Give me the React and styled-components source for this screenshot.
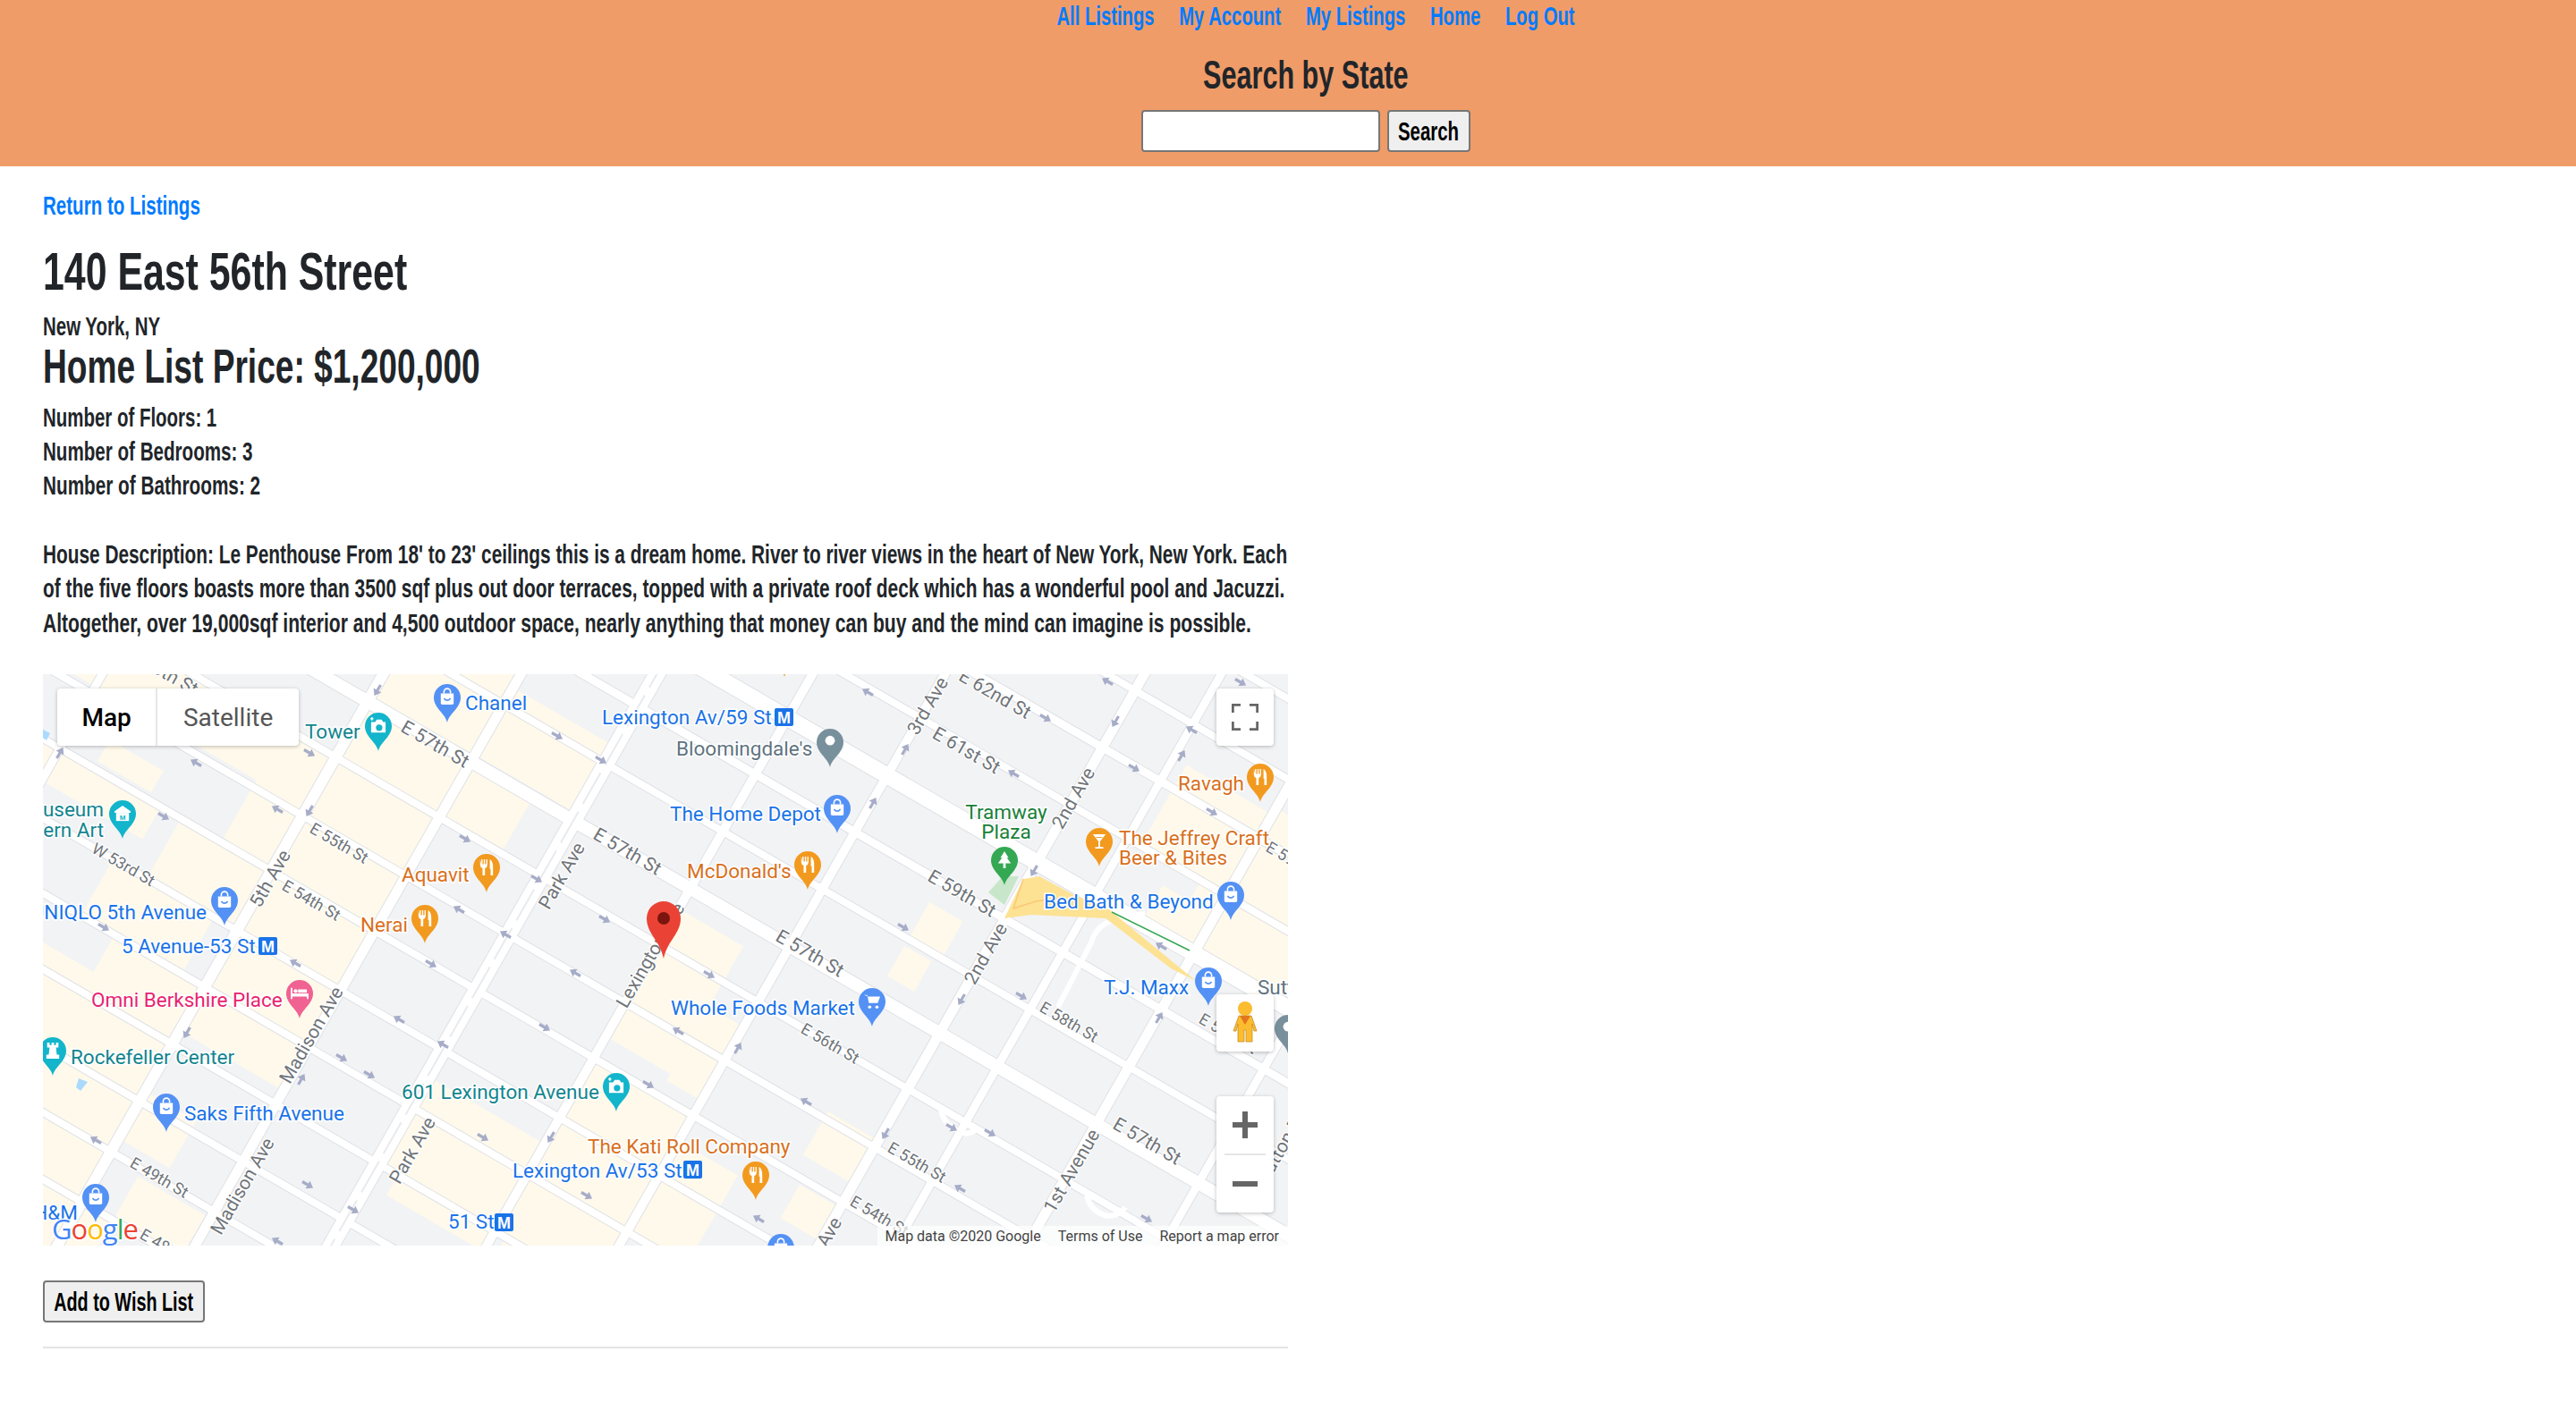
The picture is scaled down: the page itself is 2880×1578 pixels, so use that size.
import React from 'react'
import styled, { createGlobalStyle, css } from 'styled-components'

const FONT = '"Liberation Sans", Arial, sans-serif'

// no condensed family is installed, so the heading font is narrowed by hand
const narrow = (f, origin = 'left center') => css`
  transform: scaleX(${f});
  transform-origin: ${origin};
  white-space: nowrap;
`

const Global = createGlobalStyle`
  html, body { margin: 0; padding: 0; background: #fff; }
  body { font-family: ${FONT}; color: #212529; font-weight: 700; overflow-x: hidden; }
`

const Header = styled.header`
  height: 186px;
  background: #f09c68;
  display: flex;
  flex-direction: column;
  align-items: center;
`
const Nav = styled.nav`
  display: flex;
  gap: 41px;
  height: 36px;
  align-items: center;
  margin-left: 62px;
  ${narrow(0.675, 'center')}
`
const NavLink = styled.a`
  color: #007bff;
  font-size: 30px;
`
const SearchTitle = styled.h2`
  margin: 18px 0 0 40px;
  font-size: 45px;
  line-height: 60px;
  ${narrow(0.68, 'center')}
`
const SearchForm = styled.form`
  display: flex;
  gap: 8px;
  margin-top: 9px;
  padding-left: 40px;
`
const SearchInput = styled.input`
  width: 267px;
  height: 47px;
  box-sizing: border-box;
  border: 2px solid #767676;
  border-radius: 4px;
  background: #fff;
`
const PlainButton = styled.button`
  width: ${(p) => p.$w}px;
  height: 47px;
  box-sizing: border-box;
  display: flex;
  align-items: center;
  justify-content: center;
  padding: 0;
  border: 2px solid #767676;
  border-radius: 4px;
  background: #efefef;
  color: #000;
  font-family: ${FONT};
  font-weight: 700;
  font-size: 30px;
`
const ButtonLabel = styled.span`
  flex: none;
  ${(p) => narrow(p.$f, 'center')}
`

const Main = styled.main`
  width: 1392px;
  margin-left: 48px;
`
const BackLink = styled.a`
  display: block;
  margin-top: 25px;
  color: #007bff;
  font-size: 30px;
  line-height: 38px;
  ${narrow(0.685)}
`
const Title = styled.h1`
  margin: 20px 0 0;
  font-size: 60px;
  line-height: 70px;
  ${narrow(0.714)}
`
const Place = styled.div`
  margin-top: 8px;
  font-size: 29px;
  line-height: 36px;
  ${narrow(0.705)}
`
const Price = styled.h2`
  margin: 0;
  font-size: 53px;
  line-height: 54px;
  ${narrow(0.7)}
`
const Facts = styled.div`
  margin-top: 11px;
  font-size: 29px;
  line-height: 38px;
`
const Description = styled.p`
  margin: 39px 0 0;
  font-size: 29px;
  line-height: 38.4px;
`
const TextLine = styled.span`
  display: block;
  ${(p) => narrow(p.$f)}
`
const MapBox = styled.div`
  position: relative;
  margin-top: 38px;
  height: 639px;
  overflow: hidden;
  background: #f2f3f5;
  font-family: Roboto, sans-serif;
  font-weight: 400;
`
const MapArt = styled.svg`
  display: block;
  width: 1392px;
  height: 639px;
`
const Control = styled.div`
  position: absolute;
  right: ${(p) => p.$right}px;
  top: ${(p) => p.$top}px;
  width: 64px;
  height: ${(p) => p.$h}px;
  background: #fff;
  border-radius: 4px;
  box-shadow: 0 1px 4px rgba(0, 0, 0, 0.25);
  display: flex;
  flex-direction: column;
  align-items: center;
  justify-content: center;
`
const ZoomDivider = styled.div`
  width: 46px;
  height: 2px;
  background: #e6e6e6;
`
const ZoomCell = styled.div`
  flex: 1;
  display: flex;
  align-items: center;
  justify-content: center;
`
const MapTypes = styled.div`
  position: absolute;
  left: 16px;
  top: 16px;
  height: 64px;
  width: 270px;
  display: flex;
  background: #fff;
  border-radius: 4px;
  box-shadow: 0 1px 4px rgba(0, 0, 0, 0.25);
`
const MapType = styled.div`
  width: ${(p) => p.$w}px;
  display: flex;
  align-items: center;
  justify-content: center;
  font-size: 28px;
  font-weight: ${(p) => (p.$on ? 500 : 400)};
  color: ${(p) => (p.$on ? '#000' : '#565656')};
  border-left: ${(p) => (p.$on ? 'none' : '2px solid #e6e6e6')};
`
const Attribution = styled.div`
  position: absolute;
  right: 0;
  bottom: 0;
  height: 22px;
  padding: 0 10px 0 8px;
  display: flex;
  gap: 19px;
  align-items: center;
  background: rgba(255, 255, 255, 0.7);
  color: #444;
  font-size: 16px;
  white-space: nowrap;
`
const AddRow = styled.div`
  margin-top: 39px;
`
const Rule = styled.hr`
  margin: 27px 0 0;
  border: 0;
  height: 2px;
  background: #e4e4e4;
`

// svg text
const Poi = styled.text`
  font-family: Roboto, sans-serif;
  font-size: 22.5px;
  fill: ${(p) => p.$c};
  stroke: #fff;
  stroke-width: 3px;
  paint-order: stroke;
  text-anchor: ${(p) => p.$anchor || 'start'};
`
const RoadName = styled.text`
  font-family: Roboto, sans-serif;
  font-size: ${(p) => p.$size || 18}px;
  fill: #70757a;
  stroke: #fff;
  stroke-width: 2.5px;
  paint-order: stroke;
  text-anchor: middle;
`
const MetroLetter = styled.text`
  font-family: "Liberation Sans", sans-serif;
  font-size: 18px;
  font-weight: 700;
  fill: #fff;
  text-anchor: middle;
`
const MuseumLetter = styled.text`
  font-family: "Liberation Sans", sans-serif;
  font-size: 9px;
  font-weight: 700;
  fill: #12b5cb;
  text-anchor: middle;
`
const LogoText = styled.text`
  font-family: "Open Sans", sans-serif;
  font-size: 31px;
  stroke: #fff;
  stroke-width: 3px;
  paint-order: stroke;
  letter-spacing: -1px;
`

const BLUE = '#1a73e8'
const TEAL = '#12858f'
const ORANGE = '#d9701c'
const GREEN = '#188038'
const PINK = '#e8246f'
const GREY = '#5f7380'

const K_A = 0.57
const K_S = 0.58

const avenues = [
  [-30, 9], [284, 12], [438, 11], [590, 18], [764, 10], [912, 10], [1135, 11], [1221, 9], [1368, 11], [1520, 9],
]
const streets = [
  [-780, 8], [-690, 8], [-605, 9], [-520, 8], [-434, 18], [-350, 9], [-265, 8], [-180, 14], [-97, 8], [-10, 8],
  [72, 8], [161, 8], [245, 8], [330, 8], [415, 8], [490, 8], [565, 8], [650, 8],
]
const corner = (a, c) => {
  const x = (a - K_A * c + K_A * 169) / (1 + K_A * K_S)
  return [x, c + K_S * x]
}
const blockPoints = ([a1, a2, c1, c2]) =>
  [corner(a1, c1), corner(a2, c1), corner(a2, c2), corner(a1, c2)].map((p) => p.join(',')).join(' ')

const creamBlocks = [
  [284, 438, -330, 240], [438, 590, -290, -190], [440, 530, -180, -100], [-60, 284, -100, -20], [210, 284, -20, 72],
  [150, 284, 72, 161], [100, 250, 161, 245], [150, 284, 245, 330], [-60, 284, 300, 560], [-60, 120, 72, 120],
  [284, 438, 245, 310], [284, 360, 400, 470], [330, 430, 500, 560], [-60, 330, 560, 660], [20, 100, 30, 62],
  [600, 780, 200, 330], [764, 912, 70, 330], [620, 764, 330, 360], [590, 760, 220, 330], [780, 912, 330, 420],
  [764, 860, -150, 40], [860, 912, -60, 50], [912, 1000, 110, 240], [1060, 1130, -20, 45], [1075, 1135, 80, 130],
  [1040, 1090, -320, -270], [1040, 1080, -255, -210], [1240, 1368, -640, -520], [1330, 1500, -560, -440], [1290, 1368, -490, -430],
  [1368, 1500, -650, -560],
]

const arrows = [
  ['DL', 374, 18], ['DR', 298, 88], ['UL', 171, 99], ['UR', 19, 88], ['DR', 135, 159], ['UL', 262, 151], ['DL', 298, 153],
  ['DR', 472, 184], ['DR', 552, 229], ['UL', 465, 263], ['UL', 517, 291], ['DR', 628, 274], ['DR', 68, 283], ['UL', 282, 323],
  ['DR', 434, 324], ['UL', 595, 334], ['DR', 575, 69], ['DR', 624, 96], ['UL', 922, 20], ['DR', 1121, 49], ['DL', 1199, 53],
  ['UL', 1284, 62], ['DR', 1220, 105], ['UR', 1273, 91], ['UL', 1085, 111], ['UR', 964, 84], ['UR', 928, 144], ['DR', 1307, 154],
  ['DL', 1108, 220], ['DR', 962, 283], ['DR', 745, 336], ['UL', 1250, 304], ['UL', 1190, 8], ['DR', 1339, 9], ['UL', 398, 386],
  ['UL', 447, 414], ['DR', 561, 395], ['DL', 161, 401], ['DR', 334, 429], ['DR', 365, 448], ['UR', 289, 453], ['UL', 59, 521],
  ['DR', 492, 518], ['DL', 568, 518], ['DR', 296, 571], ['DR', 347, 599], ['UL', 262, 634], ['DR', 608, 583], ['DR', 677, 459],
  ['UL', 710, 399], ['UR', 777, 418], ['DL', 1027, 364], ['DR', 1094, 360], ['UR', 1248, 384], ['UL', 853, 478], ['DL', 942, 514],
  ['DR', 1016, 507], ['DR', 1059, 513], ['UL', 1025, 575], ['DR', 1234, 609], ['UL', 800, 609],
]
const ARROW_ROT = { DR: 120, UL: -60, DL: 210, UR: 30 }

const PIN_COLORS = { shop: '#5491f5', photo: '#12b5cb', museum: '#12b5cb', food: '#f29a1f', bar: '#f29a1f', dot: '#78909c', tree: '#34a853', cart: '#5491f5', bed: '#f06292', rook: '#12b5cb' }

const Glyph = ({ kind, color }) => {
  switch (kind) {
    case 'shop':
      return <g><path d="M-8,-5H8V7Q8,9 6,9H-6Q-8,9 -8,7Z" fill="#fff" /><path d="M-4,-5V-7A4,4 0 0 1 4,-7V-5" fill="none" stroke="#fff" strokeWidth="1.8" /><path d="M-4,1Q0,6 4,1" fill="none" stroke={color} strokeWidth="1.8" /></g>
    case 'cart':
      return <g fill="#fff"><path d="M-10,-8H-6L-4,2H7L10,-6H-5Z" /><circle cx="-3" cy="7" r="2" /><circle cx="6" cy="7" r="2" /></g>
    case 'photo':
      return <g><path d="M-9,-5H-4L-2,-8H4L6,-5H9V8H-9Z" fill="#fff" /><circle cx="1" cy="2" r="4" fill={color} /><path d="M-10,-9H-6M-8,-11V-7" stroke="#fff" strokeWidth="1.6" /></g>
    case 'museum':
      return <g><path d="M0,-10L10,-3V-1H-10V-3Z" fill="#fff" /><path d="M-8,-1H8V9H-8Z" fill="#fff" /><MuseumLetter x="0" y="7.5">M</MuseumLetter></g>
    case 'food':
      return <g fill="#fff"><path d="M-8,-10V-3Q-8,0 -5,1V10H-2V1Q1,0 1,-3V-10H-0.5V-4H-2V-10H-3.5V-4H-5V-10H-6.5V-4Z" /><path d="M4,-10Q8,-8 8,0V10H5V2H4Z" /></g>
    case 'bar':
      return <g><path d="M-8,-9H8L1,0V7H5V9H-5V7H-1V0Z" fill="#fff" /><path d="M-4,-5H4" stroke={color} strokeWidth="1" /></g>
    case 'tree':
      return <path d="M0,-11L5,-3H3L8,4H1.5V10H-1.5V4H-8L-3,-3H-5Z" fill="#fff" />
    case 'bed':
      return <g fill="#fff"><path d="M-11,-7H-9V0H11V7H9V4H-9V7H-11Z" /><circle cx="-5" cy="-3" r="2.4" /><path d="M-2,-5H9V-1H-2Z" /></g>
    case 'rook':
      return <path d="M-7,-10H-4V-7H-1.5V-10H1.5V-7H4V-10H7V-4H4L5,5H8V10H-8V5H-5L-4,-4H-7Z" fill="#fff" />
    default:
      return <circle r="6" cy="-2" fill="#fff" />
  }
}

const Pin = ({ x, y, kind }) => {
  const color = PIN_COLORS[kind]
  return (
    <g transform={`translate(${x} ${y})`}>
      <path d="M0,0C-2,-10 -15,-16 -15,-28A15,15 0 1 1 15,-28C15,-16 2,-10 0,0Z" fill={color} />
      <g transform="translate(0 -28) scale(.9)"><Glyph kind={kind} color={color} /></g>
    </g>
  )
}

const pins = [
  [452, 54, 'shop'], [375, 86, 'photo'], [89, 184, 'museum'], [496, 244, 'food'], [427, 301, 'food'], [203, 281, 'shop'],
  [880, 104, 'dot'], [888, 178, 'shop'], [855, 241, 'food'], [1075, 236, 'tree'], [1181, 215, 'bar'], [1361, 143, 'food'],
  [1328, 275, 'shop'], [1303, 371, 'shop'], [1392, 424, 'dot'], [927, 394, 'cart'], [797, 588, 'food'], [641, 489, 'photo'],
  [287, 385, 'bed'], [11, 449, 'rook'], [138, 512, 'shop'], [59, 613, 'shop'], [825, 669, 'shop'], [829, 3, 'food'],
]

const labels = [
  ['Chanel', 472, 40, BLUE], ['Lexington Av/59 St', 625, 56, BLUE], ['Tower', 293, 72, TEAL],
  ['Museum', 68, 159, TEAL, 'end'], ['Modern Art', 68, 182, TEAL, 'end'], ['UNIQLO 5th Avenue', 183, 274, BLUE, 'end'],
  ["Bloomingdale's", 708, 91, GREY], ['The Home Depot', 701, 164, BLUE], ['Tramway', 1077, 162, GREEN, 'middle'],
  ['Plaza', 1077, 184, GREEN, 'middle'], ['Ravagh', 1269, 130, ORANGE], ['The Jeffrey Craft', 1203, 191, ORANGE],
  ['Beer & Bites', 1203, 213, ORANGE], ["McDonald's", 720, 228, ORANGE], ['Bed Bath & Beyond', 1119, 262, BLUE],
  ['T.J. Maxx', 1186, 358, BLUE], ['Aquavit', 401, 232, ORANGE], ['Nerai', 355, 288, ORANGE], ['5 Avenue-53 St', 88, 312, BLUE],
  ['Omni Berkshire Place', 54, 372, PINK], ['Rockefeller Center', 31, 436, TEAL], ['Saks Fifth Avenue', 158, 499, BLUE],
  ['601 Lexington Avenue', 401, 475, TEAL], ['The Kati Roll Company', 609, 536, ORANGE], ['Lexington Av/53 St', 525, 563, BLUE],
  ['51 St', 453, 620, BLUE], ['Whole Foods Market', 702, 381, BLUE], ['H&M', 39, 610, BLUE, 'end'], ['Sutton', 1358, 358, GREY],
]

const roadNames = [
  ['E 57th St', 438, 79, 30, 21], ['E 57th St', 653, 199, 30, 21], ['E 57th St', 857, 313, 30, 21], ['E 57th St', 1234, 523, 30, 21],
  ['E 55th St', 331, 189, 30], ['E 55th St', 977, 546, 30], ['E 54th St', 300, 253, 30], ['E 54th St', 935, 606, 30],
  ['W 53rd St', 90, 213, 30], ['E 49th St', 130, 563, 30], ['E 48th St', 141, 643, 30], ['E 56th St', 880, 413, 30],
  ['E 58th St', 1147, 389, 30], ['E 59th St', 1027, 246, 30, 21], ['E 61st St', 1032, 86, 30, 21], ['E 62nd St', 1064, 23, 30, 21],
  ['E 58th St', 135, -2, 30, 21], ['E 58th St', 1325, 402, 30], ['E 59th St', 1400, 210, 30],
  ['5th Ave', 255, 229, -60, 21], ['Park Ave', 581, 226, -60, 21], ['Park Ave', 414, 533, -60, 21], ['Madison Ave', 301, 404, -60, 21],
  ['Madison Ave', 224, 573, -60, 21], ['3rd Ave', 990, 36, -60, 21], ['2nd Ave', 1153, 139, -60, 21], ['2nd Ave', 1055, 313, -60, 21],
  ['1st Avenue', 1151, 556, -60, 21], ['2nd Ave', 870, 642, -60, 21], ['Lexington Ave', 680, 315, -60, 21], ['Sutton Pl', 1385, 530, -60, 21],
]

const metros = [[818, 38], [241, 294], [716, 544], [505, 603]]

const CityMap = () => (
  <MapArt viewBox="0 0 1392 639">
    <rect width="1392" height="639" fill="#f2f3f5" />
    {creamBlocks.map((b) => (
      <polygon key={b.join()} points={blockPoints(b)} fill="#fef9ea" />
    ))}
    {avenues.map(([a, w]) => (
      <line key={a} x1={a + K_A * 189} y1={-20} x2={a - K_A * 491} y2={660} stroke="#dfe1e5" strokeWidth={w + 2} />
    ))}
    {streets.map(([c, w]) => (
      <line key={c} x1={-20} y1={c - 20 * K_S} x2={1412} y2={c + 1412 * K_S} stroke="#dfe1e5" strokeWidth={w + 2} />
    ))}
    {avenues.map(([a, w]) => (
      <line key={a} x1={a + K_A * 189} y1={-20} x2={a - K_A * 491} y2={660} stroke="#fff" strokeWidth={w} />
    ))}
    {streets.map(([c, w]) => (
      <line key={c} x1={-20} y1={c - 20 * K_S} x2={1412} y2={c + 1412 * K_S} stroke="#fff" strokeWidth={w} />
    ))}
    <line x1={590 + K_A * 189} y1={-20} x2={590 - K_A * 491} y2={660} stroke="#e8eaed" strokeWidth="2" strokeDasharray="40 10" />
    <path d="M1004,486Q1006,506 1032,514Q1042,512 1046,506M1167,579Q1168,600 1190,606Q1204,606 1210,596M1232,268Q1180,270 1172,300L1135,372" fill="none" stroke="#fff" strokeWidth="6" />
    <polygon points="1057,244 1073,226 1091,226 1075,258" fill="#c8e6c9" />
    <path d="M1096,229L1114,226L1151,246L1192,263L1211,279L1289,343L1261,329L1188,273L1105,269L1075,273Z" fill="#fde293" />
    <path d="M1096,229L1085,262L1110,254L1140,250" fill="none" stroke="#f9c976" strokeWidth="1.5" />
    <path d="M1195,266L1282,309" fill="none" stroke="#34a853" strokeWidth="1.5" />
    <polygon points="40,452 50,456 42,466 37,462" fill="#aadaff" />
    <polygon points="0,62 8,66 4,74 -2,70" fill="#aadaff" />
    {arrows.map(([dir, x, y]) => (
      <path key={`${x}-${y}`} transform={`translate(${x} ${y}) rotate(${ARROW_ROT[dir]})`} d="M0,-7L5,0H1.6V7H-1.6V0H-5Z" fill="#a7adc8" />
    ))}
    {roadNames.map(([t, x, y, r, s]) => (
      <RoadName key={`${t}${x}`} $size={s} transform={`translate(${x} ${y}) rotate(${r})`} y="6">{t}</RoadName>
    ))}
    {labels.map(([t, x, y, c, anchor]) => (
      <Poi key={`${t}${x}`} x={x} y={y} $c={c} $anchor={anchor}>{t}</Poi>
    ))}
    {metros.map(([x, y]) => (
      <g key={x}>
        <rect x={x} y={y} width="21" height="20" rx="2" fill="#1a73e8" />
        <MetroLetter x={x + 10.5} y={y + 16.5}>M</MetroLetter>
      </g>
    ))}
    {pins.map(([x, y, kind]) => (
      <Pin key={`${x}-${y}`} x={x} y={y} kind={kind} />
    ))}
    {/* picked location */}
    <path d="M694,318C690,298 675,290 675,273A19,19 0 1 1 713,273C713,290 698,298 694,318Z" fill="#ea4335" />
    <circle cx="694" cy="273" r="7" fill="#7b1510" />
    <LogoText x="10" y="632">
      <tspan fill="#4285f4">G</tspan><tspan fill="#ea4335">o</tspan><tspan fill="#fbbc05">o</tspan><tspan fill="#4285f4">g</tspan><tspan fill="#34a853">l</tspan><tspan fill="#ea4335">e</tspan>
    </LogoText>
  </MapArt>
)

const FullscreenIcon = () => (
  <svg width="30" height="30" viewBox="0 0 30 30"><path d="M1,10V1H10M20,1H29V10M29,20V29H20M10,29H1V20" fill="none" stroke="#666" strokeWidth="3.5" /></svg>
)
const Pegman = () => (
  <svg width="30" height="50" viewBox="0 0 30 50">
    <circle cx="15" cy="9" r="8" fill="#fbbc30" />
    <path d="M8,17H22L28,34H25L23,26V46H16V33H14V46H7V26L5,34H2Z" fill="#fbbc30" stroke="#c9902a" strokeWidth=".8" />
    <path d="M9,17H21L15,27Z" fill="#e2761f" />
  </svg>
)
const PlusIcon = () => (
  <svg width="30" height="30" viewBox="0 0 30 30"><path d="M15,0V30M1,15H29" stroke="#666" strokeWidth="6" /></svg>
)
const MinusIcon = () => (
  <svg width="30" height="10" viewBox="0 0 30 10"><path d="M1,5H29" stroke="#666" strokeWidth="6" /></svg>
)

const NAV = ['All Listings', 'My Account', 'My Listings', 'Home', 'Log Out']

export default function App() {
  return (
    <>
      <Global />
      <Header>
        <Nav>{NAV.map((n) => <NavLink key={n}>{n}</NavLink>)}</Nav>
        <SearchTitle>Search by State</SearchTitle>
        <SearchForm onSubmit={(e) => e.preventDefault()}>
          <SearchInput />
          <PlainButton $w={93}><ButtonLabel $f={0.68}>Search</ButtonLabel></PlainButton>
        </SearchForm>
      </Header>
      <Main>
        <BackLink>Return to Listings</BackLink>
        <Title>140 East 56th Street</Title>
        <Place>New York, NY</Place>
        <Price>Home List Price: $1,200,000</Price>
        <Facts>
          <TextLine $f={0.705}>Number of Floors: 1</TextLine>
          <TextLine $f={0.71}>Number of Bedrooms: 3</TextLine>
          <TextLine $f={0.715}>Number of Bathrooms: 2</TextLine>
        </Facts>
        <Description>
          <TextLine $f={0.718}>House Description: Le Penthouse From 18' to 23' ceilings this is a dream home. River to river views in the heart of New York, New York. Each</TextLine>
          <TextLine $f={0.721}>of the five floors boasts more than 3500 sqf plus out door terraces, topped with a private roof deck which has a wonderful pool and Jacuzzi.</TextLine>
          <TextLine $f={0.727}>Altogether, over 19,000sqf interior and 4,500 outdoor space, nearly anything that money can buy and the mind can imagine is possible.</TextLine>
        </Description>
        <MapBox>
          <CityMap />
          <MapTypes>
            <MapType $on $w={111}>Map</MapType>
            <MapType $w={159}>Satellite</MapType>
          </MapTypes>
          <Control $right={16} $top={16} $h={64}><FullscreenIcon /></Control>
          <Control $right={16} $top={358} $h={64}><Pegman /></Control>
          <Control $right={16} $top={472} $h={130}>
            <ZoomCell><PlusIcon /></ZoomCell>
            <ZoomDivider />
            <ZoomCell><MinusIcon /></ZoomCell>
          </Control>
          <Attribution>
            <span>Map data ©2020 Google</span>
            <span>Terms of Use</span>
            <span>Report a map error</span>
          </Attribution>
        </MapBox>
        <AddRow><PlainButton $w={181}><ButtonLabel $f={0.66}>Add to Wish List</ButtonLabel></PlainButton></AddRow>
        <Rule />
      </Main>
    </>
  )
}
